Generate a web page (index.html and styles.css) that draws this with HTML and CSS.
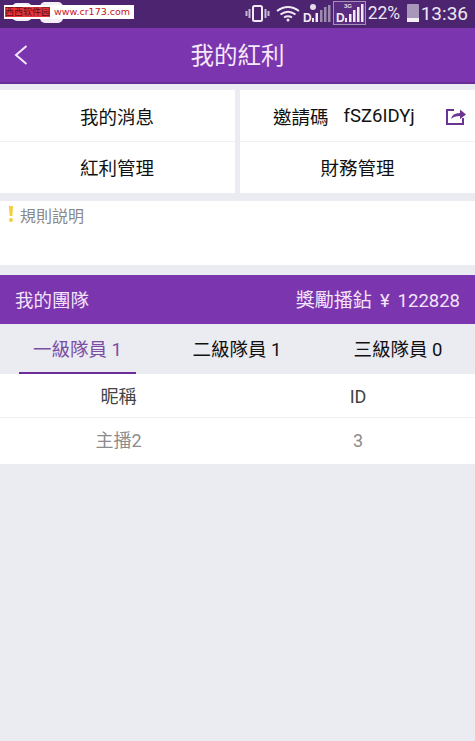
FILE: index.html
```html
<!DOCTYPE html>
<html lang="zh-Hant">
<head>
  <meta charset="UTF-8">
  <meta name="viewport" content="width=device-width, initial-scale=1.0">
  <title>我的紅利</title>
  <link rel="stylesheet" href="styles.css">
</head>
<body>
  <div class="status-bar">
    <div class="watermark">
      <span class="wm-blob wm-blob-a"></span>
      <span class="wm-blob wm-blob-b"></span>
      <span class="wm-name">西西软件园</span><span class="wm-url">www.cr173.com</span>
    </div>
    <div class="status-icons">
      <svg class="ic-vibrate" width="25" height="17" viewBox="0 0 25 17" fill="none" stroke="#f1eaf5">
        <rect x="8" y="1" width="9" height="15" rx="1.5" stroke-width="2"/>
        <path d="M4.5 4v9M1.5 6v5M20.5 4v9M23.5 6v5" stroke-width="2" stroke="#c9b8d6"/>
      </svg>
      <svg class="ic-wifi" width="24" height="17" viewBox="0 0 24 17" fill="none" stroke="#f1eaf5" stroke-width="2">
        <path d="M1 6q11-8 22 0M4.5 9.500q7.500-5.500 15 0M8 12.500q4-2.500 8 0"/>
        <circle cx="12" cy="15" r="1.5" fill="#f1eaf5" stroke="none"/>
      </svg>
      <svg class="ic-sim" width="28" height="24" viewBox="0 -2 28 24">
        <circle cx="10" cy="4" r="3" fill="#e4dcea"/>
        <text x="0" y="19" class="sim-letter">D</text>
        <path d="M9 19v-4h2v4zM12.500 19V10h2.500v9z" fill="#f1eaf5"/>
        <path d="M17 19V7h2.500v12zM21 19V4h2.500v15zM25 19V2h2.500v17z" fill="#9d8bad"/>
      </svg>
      <svg class="ic-sim-active" width="33" height="24" viewBox="0 0 33 24">
        <rect x="0.5" y="0.5" width="32" height="23" fill="#5a2d80" stroke="#a48fb8"/>
        <text x="3" y="21" class="sim-letter">D</text>
        <text x="11" y="7" class="sim-net">3G</text>
        <path d="M12 21v-4h2v4zM16 21v-8h2.500v8zM20 21V9h2.500v12zM24 21V6h2.500v15zM28 21V3h2.500v18z" fill="#f1eaf5"/>
      </svg>
      <span class="battery-pct">22%</span>
      <span class="battery"><span class="battery-level"></span></span>
      <span class="clock">13:36</span>
    </div>
  </div>

  <header class="nav-bar">
    <svg class="back" width="14" height="20" viewBox="0 0 14 20" fill="none" stroke="#f3e6fa" stroke-width="2">
      <path d="M12.500 1L2 10l10.500 9"/>
    </svg>
    <h1>我的紅利</h1>
  </header>

  <section class="menu-grid">
    <div class="menu-col menu-col-left">
      <div class="menu-cell">我的消息</div>
      <div class="menu-cell">紅利管理</div>
    </div>
    <div class="menu-col menu-col-right">
      <div class="menu-cell invite">
        <span>邀請碼</span><span class="invite-code">fSZ6IDYj</span>
        <svg class="share" width="22" height="18" viewBox="0 0 22 18" fill="none" stroke="#6b3493" stroke-width="2">
          <path d="M9 3H2v14h16v-6"/>
          <path d="M6 12q1-6 9-6V2.500l6 5-6 4.500V9q-6 0-9 3z" fill="#6b3493" stroke="none"/>
        </svg>
      </div>
      <div class="menu-cell">財務管理</div>
    </div>
  </section>

  <section class="rules">
    <svg class="rules-mark" width="6" height="18" viewBox="0 0 6 18">
      <path d="M1 1h4l-.6 10H1.600z" fill="#f2d03c"/>
      <circle cx="3" cy="15" r="2" fill="#f2d03c"/>
    </svg>
    <span class="rules-text">規則説明</span>
  </section>

  <section class="team-head">
    <span>我的團隊</span>
    <span class="reward"><span class="reward-label">獎勵播鉆</span><span>¥</span><span>122828</span></span>
  </section>

  <nav class="tabs">
    <div class="tab tab-active">一級隊員 1</div>
    <div class="tab tab-second">二級隊員 1</div>
    <div class="tab tab-third">三級隊員 0</div>
  </nav>

  <div class="table-row table-head">
    <div>昵稱</div>
    <div>ID</div>
  </div>
  <div class="table-row table-body">
    <div>主播2</div>
    <div>3</div>
  </div>
</body>
</html>
```

FILE: styles.css
```css
* {
  box-sizing: border-box;
}
html, body {
  margin: 0;
  padding: 0;
}
body {
  width: 475px;
  height: 741px;
  overflow: hidden;
  background-color: #ebebf2;
  color: #111;
  font-family: "Roboto", "Noto Sans CJK TC", sans-serif;
}

/* status bar */
.status-bar {
  height: 28px;
  background-color: #4d2470;
  display: flex;
  justify-content: space-between;
  align-items: center;
  isolation: isolate;
}
.watermark {
  position: relative;
  margin: 0 0 4px 4px;
  width: 130px;
  height: 14px;
  background-color: #fff;
  display: flex;
  align-items: center;
  line-height: 10px;
  padding-left: 1px;
}
.wm-blob {
  position: absolute;
  background-color: #f4eef7;
  border-radius: 5px;
  z-index: -1;
}
.wm-blob-a {
  left: 8px;
  top: -2px;
  width: 20px;
  height: 18px;
}
.wm-blob-b {
  left: 36px;
  top: -3px;
  width: 23px;
  height: 21px;
}
.wm-name {
  background-color: #e8333a;
  color: #5b1015;
  font-family: "Noto Sans CJK SC", sans-serif;
  font-size: 9px;
  margin-right: 4px;
}
.wm-url {
  color: #c8141c;
  font-family: "DejaVu Sans", sans-serif;
  font-size: 9.5px;
}
.status-icons {
  display: flex;
  align-items: center;
  padding: 0 7px 2px 0;
  color: #eee6f3;
}
.ic-wifi {
  margin-left: 6px;
}
.ic-sim {
  margin-left: 3px;
}
.ic-sim-active {
  margin-left: 2px;
}
.sim-letter {
  fill: #f1eaf5;
  font-family: "Liberation Sans", sans-serif;
  font-size: 12px;
  font-weight: 700;
}
.sim-net {
  fill: #e4dcea;
  font-family: "Liberation Sans", sans-serif;
  font-size: 6px;
  font-weight: 700;
}
.battery-pct {
  margin-left: 2px;
  width: 34px;
  font-size: 17.5px;
}
.battery {
  margin-left: 5px;
  width: 12px;
  height: 18px;
  background-color: #a797b8;
  border-radius: 1px;
  display: flex;
  align-items: flex-end;
}
.battery-level {
  width: 100%;
  height: 4px;
  background-color: #f4eff7;
}
.clock {
  margin-left: 2px;
  font-size: 19px;
}

/* nav */
.nav-bar {
  height: 56px;
  background-color: #7b35ae;
  border-bottom: 2px solid #6a2c97;
  display: grid;
  grid-template-columns: 1fr auto 1fr;
  align-items: center;
  padding-left: 14px;
}
.nav-bar h1 {
  margin: 0 14px 2px 0;
  color: #f6e9fb;
  font-size: 23.5px;
  font-weight: 400;
}

/* menu */
.menu-grid {
  display: flex;
  gap: 5px;
  padding-top: 6px;
  padding-bottom: 8px;
}
.menu-col {
  background-color: #fff;
  flex: 1;
}
.menu-col-left {
  flex: 0 0 235px;
}
.menu-cell {
  height: 51.5px;
  display: flex;
  align-items: center;
  justify-content: center;
  font-size: 18.5px;
  border-bottom: 1px solid #f0f0f4;
}
.menu-cell:first-child {
  padding-top: 2px;
}
.menu-cell:last-child {
  border-bottom: none;
}
.menu-col-left .menu-cell {
  padding-right: 1px;
}
.menu-cell.invite {
  justify-content: flex-start;
  padding: 2px 8px 0 33px;
}
.invite-code {
  margin-left: 15px;
  font-size: 18.5px;
}
.share {
  margin-left: auto;
}

/* rules */
.rules {
  height: 64px;
  background-color: #fff;
  color: #888;
  font-size: 16px;
  padding: 4px 0 0 8px;
  display: flex;
  align-items: flex-start;
  gap: 6px;
}
.rules-mark {
  flex: none;
}
.rules-text {
  margin-top: -2px;
}

/* team */
.team-head {
  margin-top: 10px;
  height: 49px;
  background-color: #7b35ae;
  color: #f3e4fa;
  font-size: 18.5px;
  display: flex;
  justify-content: space-between;
  align-items: center;
  padding: 0 15px 2px;
}
.reward {
  display: flex;
  align-items: baseline;
  gap: 8px;
}
.reward-label {
  font-size: 19px;
}
.tabs {
  display: flex;
  height: 50px;
  background-color: #ebebf2;
}
.tab {
  display: flex;
  align-items: center;
  justify-content: center;
  padding-bottom: 2px;
  font-size: 18.5px;
  color: #111;
}
.tab-active {
  color: #7b4ea3;
  margin-left: 19px;
  flex: 0 0 117px;
  padding-bottom: 0;
  border-bottom: 2px solid #6a2c97;
}
.tab-second {
  margin-left: 27px;
  flex: 0 0 148px;
}
.tab-third {
  flex: 0 0 174px;
}
.table-row {
  display: flex;
  background-color: #fff;
  font-size: 18px;
}
.table-row > div {
  flex: 0 0 237px;
  text-align: center;
}
.table-row > div:last-child {
  flex: 0 0 242px;
}
.table-head {
  height: 44px;
  line-height: 46px;
  color: #444;
  border-bottom: 1px solid #f0f0f4;
}
.table-body {
  height: 46px;
  line-height: 46px;
  color: #8c8c8c;
}
```
